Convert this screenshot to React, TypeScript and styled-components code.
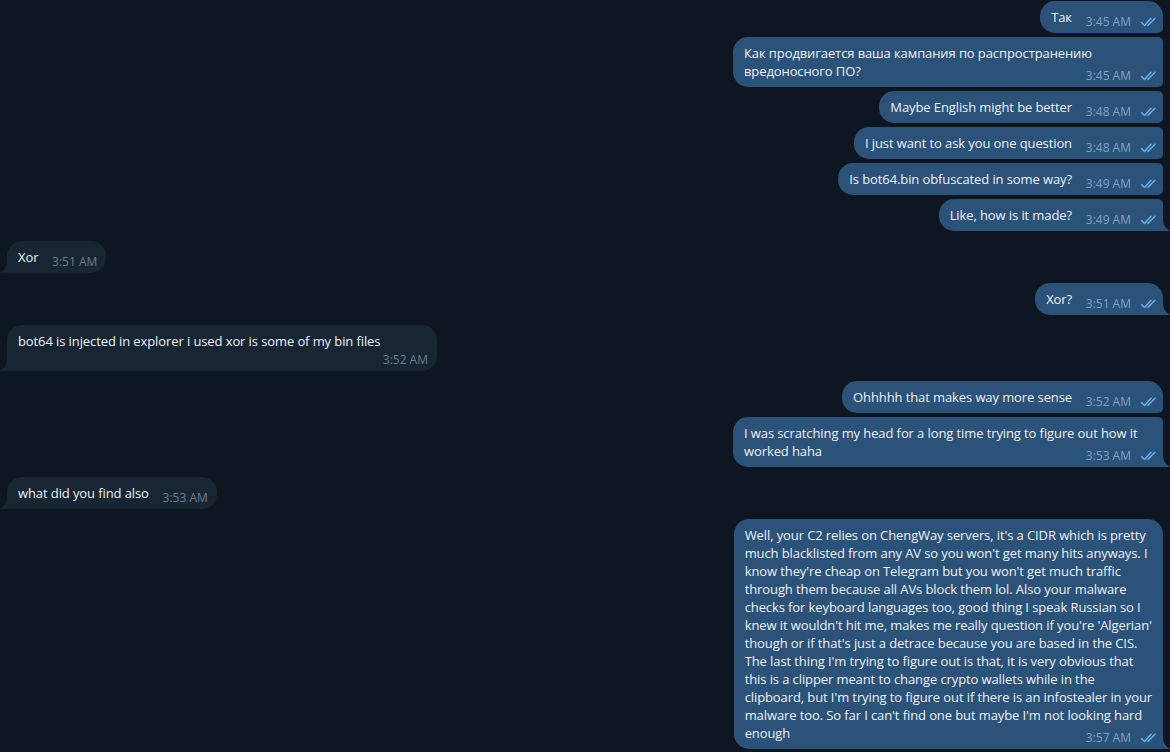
import styled, { createGlobalStyle } from "styled-components";

interface IMessage {
  out: boolean;
  text: string;
  time: string;
}

const messages: IMessage[] = [
  { out: true, text: "Так", time: "3:45 AM" },
  {
    out: true,
    text: "Как продвигается ваша кампания по распространению вредоносного ПО?",
    time: "3:45 AM",
  },
  { out: true, text: "Maybe English might be better", time: "3:48 AM" },
  { out: true, text: "I just want to ask you one question", time: "3:48 AM" },
  { out: true, text: "Is bot64.bin obfuscated in some way?", time: "3:49 AM" },
  { out: true, text: "Like, how is it made?", time: "3:49 AM" },
  { out: false, text: "Xor", time: "3:51 AM" },
  { out: true, text: "Xor?", time: "3:51 AM" },
  {
    out: false,
    text: "bot64 is injected in explorer i used xor is some of my bin files",
    time: "3:52 AM",
  },
  { out: true, text: "Ohhhhh that makes way more sense", time: "3:52 AM" },
  {
    out: true,
    text: "I was scratching my head for a long time trying to figure out how it worked haha",
    time: "3:53 AM",
  },
  { out: false, text: "what did you find also", time: "3:53 AM" },
  {
    // line breaks follow the wrapping of the original chat
    out: true,
    text: [
      "Well, your C2 relies on ChengWay servers, it's a CIDR which is pretty",
      "much blacklisted from any AV so you won't get many hits anyways. I",
      "know they're cheap on Telegram but you won't get much traffic",
      "through them because all AVs block them lol. Also your malware",
      "checks for keyboard languages too, good thing I speak Russian so I",
      "knew it wouldn't hit me, makes me really question if you're 'Algerian'",
      "though or if that's just a detrace because you are based in the CIS.",
      "The last thing I'm trying to figure out is that, it is very obvious that",
      "this is a clipper meant to change crypto wallets while in the",
      "clipboard, but I'm trying to figure out if there is an infostealer in your",
      "malware too. So far I can't find one but maybe I'm not looking hard",
      "enough",
    ].join("\n"),
    time: "3:57 AM",
  },
];

const GlobalStyle = createGlobalStyle`
  html, body {
    margin: 0;
    padding: 0;
    background: #0e1621;
  }
  body {
    font-family: "Open Sans", "Liberation Sans", sans-serif;
    -webkit-font-smoothing: antialiased;
  }
`;

const Chat = styled.div`
  display: flex;
  flex-direction: column;
  padding: 1px 7px 0 7px;
  height: 752px;
  box-sizing: border-box;
  overflow: hidden;
`;

const Row = styled.div<{ $out: boolean; $groupStart: boolean }>`
  display: flex;
  justify-content: ${(p) => (p.$out ? "flex-end" : "flex-start")};
  margin-top: ${(p) => (p.$groupStart ? "10px" : "4px")};
  &:first-child {
    margin-top: 0;
  }
`;

const Bubble = styled.div<{ $out: boolean; $first: boolean; $last: boolean }>`
  position: relative;
  max-width: 430px;
  box-sizing: border-box;
  padding: 7px 11px 7px 11px;
  background: ${(p) => (p.$out ? "#2b5278" : "#182533")};
  color: #eef1f4;
  font-size: 13px;
  line-height: 0;
  letter-spacing: -0.1px;
  border-radius: ${(p) =>
    p.$out
      ? `15px ${p.$first ? 15 : 5}px ${p.$last ? 0 : 5}px 15px`
      : `${p.$first ? 15 : 5}px 15px 15px ${p.$last ? 0 : 5}px`};
`;

const Text = styled.span`
  line-height: 18px;
  white-space: pre-line;
`;

const Spacer = styled.span<{ $out: boolean }>`
  display: inline-block;
  width: ${(p) => (p.$out ? 80 : 57)}px;
  height: 14px;
`;

const Meta = styled.div<{ $out: boolean }>`
  position: absolute;
  right: ${(p) => (p.$out ? 6 : 9)}px;
  bottom: 4px;
  display: flex;
  align-items: center;
  gap: 9px;
  font-size: 12px;
  line-height: 14px;
  letter-spacing: 0;
  color: ${(p) => (p.$out ? "#7ea3c7" : "#6d7f8f")};
  white-space: nowrap;
`;

const Tail = styled.svg<{ $out: boolean }>`
  position: absolute;
  bottom: 0;
  ${(p) => (p.$out ? "right: -8px;" : "left: -8px;")}
  width: 8px;
  height: 12px;
  fill: ${(p) => (p.$out ? "#2b5278" : "#182533")};
`;

const Check = styled.svg`
  width: 17px;
  height: 10px;
  fill: none;
  stroke: #6fb2ee;
  stroke-width: 1.4;
  stroke-linecap: round;
  stroke-linejoin: round;
`;

const DoubleCheck = () => (
  <Check viewBox="0 0 17 10">
    <path d="M1.5 5.5 L4.5 8.5 L11 1.2" />
    <path d="M7.8 8.5 L15 1.2" />
  </Check>
);

const App = () => {
  return (
    <>
      <GlobalStyle />
      <Chat>
        {messages.map((m, i) => {
          const prev = messages[i - 1];
          const next = messages[i + 1];
          const first = !prev || prev.out !== m.out;
          const last = !next || next.out !== m.out;
          return (
            <Row key={i} $out={m.out} $groupStart={first}>
              <Bubble $out={m.out} $first={first} $last={last}>
                <Text>{m.text}</Text>
                <Spacer $out={m.out} />
                <Meta $out={m.out}>
                  <span>{m.time}</span>
                  {m.out && <DoubleCheck />}
                </Meta>
                {last && (
                  <Tail $out={m.out} viewBox="0 0 8 12">
                    {m.out ? (
                      <path d="M0 0 C0 6 3 10 8 12 H0 Z" />
                    ) : (
                      <path d="M8 0 C8 6 5 10 0 12 H8 Z" />
                    )}
                  </Tail>
                )}
              </Bubble>
            </Row>
          );
        })}
      </Chat>
    </>
  );
};

export default App;
